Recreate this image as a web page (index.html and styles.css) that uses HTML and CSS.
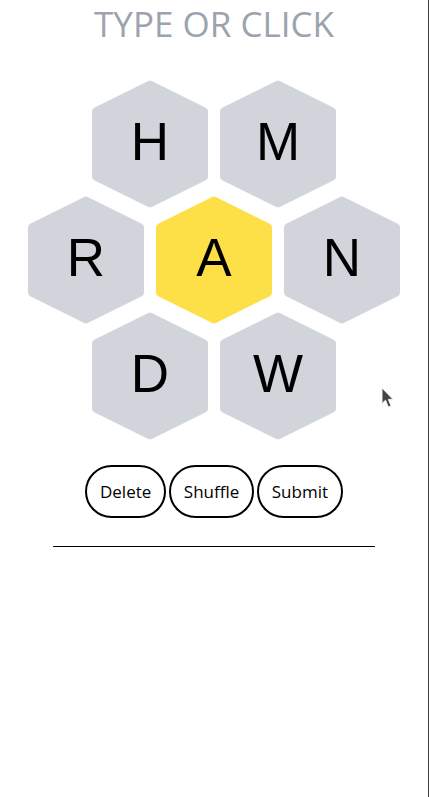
FILE: index.html
```html
<!DOCTYPE html>
<html lang="en">
<head>
<meta charset="utf-8">
<title>Spelling Bee</title>
<link rel="stylesheet" href="styles.css">
</head>
<body>
<div class="page">
  <h1 class="title">TYPE OR CLICK</h1>
  <div class="hive">
    <div class="hive-row">
      <div class="hex"><svg class="hex-bg" viewBox="0 0 116 128"><polygon points="58,4.5 112,31.4 112,96.6 58,123.5 4,96.6 4,31.4"/></svg><span class="hex-letter">H</span></div>
      <div class="hex"><svg class="hex-bg" viewBox="0 0 116 128"><polygon points="58,4.5 112,31.4 112,96.6 58,123.5 4,96.6 4,31.4"/></svg><span class="hex-letter">M</span></div>
    </div>
    <div class="hive-row">
      <div class="hex"><svg class="hex-bg" viewBox="0 0 116 128"><polygon points="58,4.5 112,31.4 112,96.6 58,123.5 4,96.6 4,31.4"/></svg><span class="hex-letter">R</span></div>
      <div class="hex hex-center"><svg class="hex-bg" viewBox="0 0 116 128"><polygon points="58,4.5 112,31.4 112,96.6 58,123.5 4,96.6 4,31.4"/></svg><span class="hex-letter">A</span></div>
      <div class="hex"><svg class="hex-bg" viewBox="0 0 116 128"><polygon points="58,4.5 112,31.4 112,96.6 58,123.5 4,96.6 4,31.4"/></svg><span class="hex-letter">N</span></div>
    </div>
    <div class="hive-row">
      <div class="hex"><svg class="hex-bg" viewBox="0 0 116 128"><polygon points="58,4.5 112,31.4 112,96.6 58,123.5 4,96.6 4,31.4"/></svg><span class="hex-letter">D</span></div>
      <div class="hex"><svg class="hex-bg" viewBox="0 0 116 128"><polygon points="58,4.5 112,31.4 112,96.6 58,123.5 4,96.6 4,31.4"/></svg><span class="hex-letter">W</span></div>
    </div>
  </div>
  <div class="actions">
    <button class="btn" type="button">Delete</button>
    <button class="btn" type="button">Shuffle</button>
    <button class="btn" type="button">Submit</button>
  </div>
  <div class="divider"></div>
  <svg class="cursor" viewBox="0 0 13 22" width="13" height="22"><path d="M1,1 L1,16.5 L4.5,13.2 L7.3,20 L10,18.9 L7.4,12.4 L12,12.4 Z"/></svg>
</div>
</body>
</html>
```

FILE: styles.css
```css
html, body {
  margin: 0;
  padding: 0;
  background: #ffffff;
}

.page {
  position: relative;
  width: 428px;
  min-height: 797px;
  border-right: 1px solid #3d3d3d;
  font-family: "Open Sans", "Noto Sans", sans-serif;
}

.title {
  margin: 0;
  font-family: "Open Sans", sans-serif;
  font-weight: 400;
  font-size: 35px;
  line-height: 48px;
  color: #9ca3af;
  text-align: center;
}

.hive {
  margin-top: 32px;
  display: flex;
  flex-direction: column;
  align-items: center;
}

.hive-row {
  display: flex;
  justify-content: center;
  gap: 12px;
}

.hive-row + .hive-row {
  margin-top: -12px;
}

.hex {
  width: 116px;
  height: 128px;
  display: grid;
  place-items: center;
}

.hex-bg {
  grid-area: 1 / 1;
  width: 116px;
  height: 128px;
  display: block;
}

.hex-bg polygon {
  fill: #d1d5db;
  stroke: #d1d5db;
  stroke-width: 8;
  stroke-linejoin: round;
}

.hex-center .hex-bg polygon {
  fill: #fde047;
  stroke: #fde047;
}

.hex-letter {
  grid-area: 1 / 1;
  font-family: "Liberation Sans", Arial, sans-serif;
  font-size: 53px;
  color: #000000;
  padding-bottom: 6px;
}

.actions {
  margin-top: 25px;
  display: flex;
  justify-content: center;
  gap: 3.5px;
}

.btn {
  font-family: "Open Sans", sans-serif;
  font-size: 17px;
  line-height: 23px;
  padding: 13px 12.5px;
  border: 2px solid #000000;
  border-radius: 9999px;
  background: #ffffff;
  color: #000000;
  margin: 0;
}

.divider {
  width: 322px;
  height: 1px;
  margin: 28px auto 0;
  background: #000000;
}

.cursor {
  position: absolute;
  left: 381px;
  top: 387px;
}

.cursor path {
  fill: #454545;
  stroke: #f2f2f2;
  stroke-width: 1;
  stroke-linejoin: round;
}
```
